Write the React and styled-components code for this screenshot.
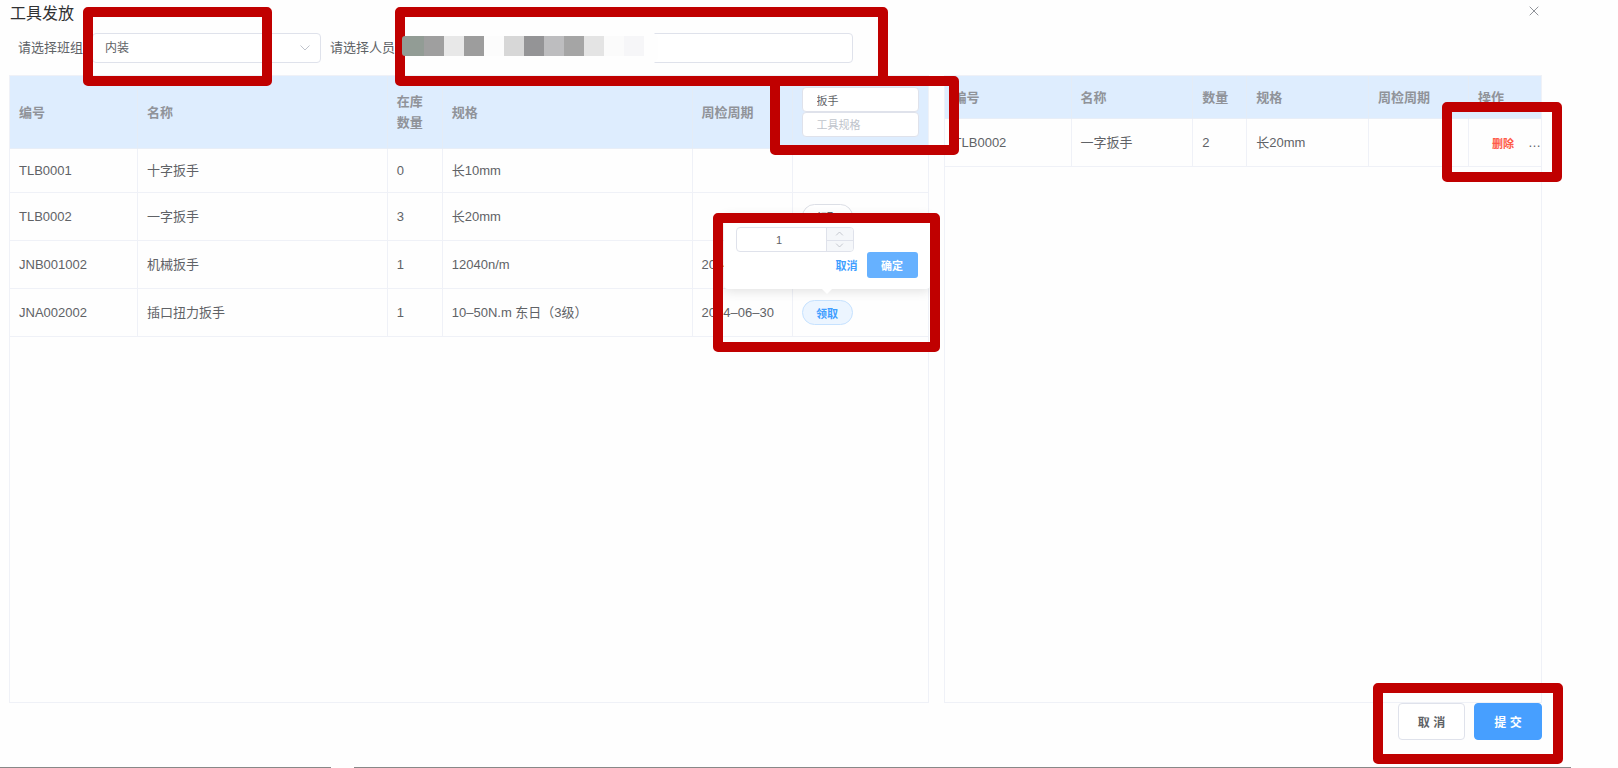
import React, { useState } from "react";
import styled, { createGlobalStyle, css } from "styled-components";

const GlobalStyle = createGlobalStyle`
  *, *::before, *::after { box-sizing: border-box; }
  body {
    margin: 0;
    background: #fefefe;
    color: #606266;
    font-family: "Liberation Sans", "Noto Sans CJK SC", sans-serif;
    font-size: 13px;
  }
  button, input, select { font-family: inherit; margin: 0; outline: none; }
  button { cursor: pointer; }
`;

const Dialog = styled.div`
  display: flex;
  flex-direction: column;
  min-height: 100vh;
`;

const Content = styled.main`
  flex: 1;
  display: flex;
  flex-direction: column;
  padding: 0 76px 27px 9px;
`;

const Header = styled.header`
  display: flex;
  justify-content: space-between;
  align-items: flex-start;
  height: 33px;
`;

const Title = styled.h1`
  margin: 0;
  padding-left: 1px;
  font-size: 16px;
  line-height: 28px;
  font-weight: 400;
  color: #303133;
`;

const CloseButton = styled.button`
  display: flex;
  align-items: center;
  justify-content: center;
  width: 16px;
  height: 22px;
  padding: 0;
  border: 0;
  background: none;
  color: #909399;
`;

const Form = styled.form`
  display: flex;
  align-items: center;
  gap: 9px;
  padding-left: 9px;
  margin-bottom: 12px;
`;

const Field = styled.div`
  display: flex;
  align-items: center;
  gap: 9px;
`;

const Label = styled.label`
  line-height: 28px;
  white-space: nowrap;
`;

const Control = styled.div`
  position: relative;
  width: ${(p) => p.$width}px;
`;

const boxed = css`
  border: 1px solid #dfe2eb;
  border-radius: 4px;
  background: #fff;
  color: #606266;
`;

const Select = styled.select`
  ${boxed}
  appearance: none;
  display: block;
  width: 100%;
  height: 30px;
  padding: 0 30px 0 12px;
  font-size: 12px;
`;

const Input = styled.input`
  ${boxed}
  display: block;
  width: 100%;
  height: 30px;
  padding: 0 12px;
  font-size: 12px;
`;

const SelectArrow = styled.svg`
  position: absolute;
  right: 10px;
  top: 9px;
  pointer-events: none;
`;

const Mosaic = styled.div`
  position: absolute;
  left: -2px;
  top: -1px;
  display: flex;
  width: 256px;
  height: 32px;
  padding: 4px 0 8px;
  border-radius: 8px;
  background: #fefefe;
`;

const MosaicTile = styled.span`
  position: relative;
  z-index: 6;
  width: 20px;
  background: ${(p) => p.$tone};
  &:first-child { width: 22px; border-radius: 3px 0 0 3px; }
`;

const Frame = styled.span`
  position: absolute;
  inset: ${(p) => p.$inset};
  z-index: 5;
  border: 10px solid #c00000;
  border-radius: 5px;
  pointer-events: none;
`;

const Panels = styled.div`
  flex: 1;
  display: flex;
  gap: 15px;
`;

const Panel = styled.section`
  flex: ${(p) => p.$grow} 1 0;
  min-width: 0;
  border: 1px solid #eff1f7;
`;

const Table = styled.table`
  width: 100%;
  table-layout: fixed;
  border-collapse: separate;
  border-spacing: 0;
`;

const HeadRow = styled.tr`
  height: ${(p) => p.$height}px;
`;

const BodyRow = styled.tr`
  height: ${(p) => (p.$compact ? 44 : 48)}px;
`;

const Th = styled.th`
  position: relative;
  padding: 0 9px;
  border-right: 1px solid #e4ecf6;
  border-bottom: 1px solid #e8eef7;
  background: #deedfe;
  color: #909399;
  font-weight: 700;
  line-height: 21px;
  text-align: left;
  &:last-child { border-right: 0; }
`;

const Td = styled.td`
  position: relative;
  padding: 0 9px;
  border-right: 1px solid #eff1f7;
  border-bottom: 1px solid #eff1f7;
  line-height: 20px;
  white-space: nowrap;
  &:last-child { border-right: 0; }
`;

const Filters = styled.div`
  position: relative;
  display: grid;
`;

const FilterInput = styled.input`
  ${boxed}
  width: 100%;
  height: 25px;
  padding: 0 14px;
  font-size: 11px;
  &::placeholder { color: #c0c4cc; opacity: 1; }
`;

const PillAnchor = styled.div`
  position: relative;
  width: 51px;
  height: 25px;
`;

const Pill = styled.button`
  width: 51px;
  height: 25px;
  padding: 0;
  border: 1px solid ${(p) => (p.$active ? "#c6e2ff" : "#dcdfe6")};
  border-radius: 13px;
  background: ${(p) => (p.$active ? "#ecf5ff" : "#fff")};
  color: ${(p) => (p.$active ? "#409eff" : "#606266")};
  font-size: 11px;
  font-weight: 700;
`;

const Popover = styled.div`
  position: absolute;
  left: -78px;
  bottom: 36px;
  z-index: 3;
  width: 206px;
  padding: 12px 12px 11px;
  border-radius: 4px;
  background: #fff;
  box-shadow: 0 2px 12px rgba(0, 0, 0, 0.12);
  &::after {
    content: "";
    position: absolute;
    left: 98px;
    bottom: -5px;
    border: 5px solid transparent;
    border-top-color: #fff;
    border-bottom: 0;
  }
`;

const Stepper = styled.div`
  ${boxed}
  display: flex;
  width: 118px;
  height: 25px;
  overflow: hidden;
`;

const StepperInput = styled.input`
  flex: 1;
  min-width: 0;
  border: 0;
  padding: 0 4px 0 0;
  background: none;
  color: #606266;
  font-size: 11px;
  text-align: center;
`;

const StepperButtons = styled.div`
  display: grid;
  grid-template-rows: 1fr 1fr;
  width: 27px;
  border-left: 1px solid #dfe2eb;
`;

const StepButton = styled.button`
  display: flex;
  align-items: center;
  justify-content: center;
  min-height: 0;
  padding: 0;
  border: 0;
  background: #f5f7fa;
  color: #b4b8c0;
  & + & { border-top: 1px solid #dfe2eb; }
`;

const PopoverActions = styled.div`
  display: flex;
  justify-content: flex-end;
  gap: 9px;
`;

const TextButton = styled.button`
  padding: 0;
  border: 0;
  background: none;
  color: ${(p) => p.$color};
  font-size: 11px;
  font-weight: 700;
`;

const ConfirmButton = styled.button`
  width: 51px;
  height: 26px;
  padding: 0;
  border: 0;
  border-radius: 3px;
  background: #66b1ff;
  color: #fff;
  font-size: 11px;
  font-weight: 700;
`;

const RowActions = styled.div`
  display: flex;
  justify-content: space-between;
  padding-left: 14px;
  margin-right: -9px;
`;

const Footer = styled.footer`
  display: flex;
  justify-content: flex-end;
`;

const FooterActions = styled.div`
  position: relative;
  display: flex;
  gap: 9px;
`;

const FooterButton = styled.button`
  width: ${(p) => (p.$primary ? 68 : 67)}px;
  height: 37px;
  padding: 0;
  border: 1px solid ${(p) => (p.$primary ? "#479fff" : "#dfe2eb")};
  border-radius: 4px;
  background: ${(p) => (p.$primary ? "#479fff" : "#fff")};
  color: ${(p) => (p.$primary ? "#fff" : "#606266")};
  font-size: 12px;
  font-weight: 700;
`;

const BaseLine = styled.div`
  display: flex;
  gap: 23px;
  padding-right: 47px;
`;

const LinePart = styled.span`
  height: 1px;
  background: #888;
  flex: ${(p) => (p.$width ? `0 0 ${p.$width}px` : "1")};
`;

function Chevron({ size, up }) {
  return (
    <svg width={size} height={size} viewBox="0 0 12 12" fill="none" stroke="currentColor" aria-hidden="true">
      <path d={up ? "M1.5 8.5 6 4l4.5 4.5" : "M1.5 3.5 6 8l4.5-4.5"} />
    </svg>
  );
}

const tiles = [
  "#929c95", "#9f9f9f", "#e8e8e8", "#9d9d9d", "#fcfcfc", "#d7d7d7",
  "#949496", "#bdbdbf", "#a5a5a5", "#e4e4e4", "#fbfbfb", "#f6f6f8",
];

const tools = [
  { code: "TLB0001", name: "十字扳手", stock: 0, spec: "长10mm", cycle: "" },
  { code: "TLB0002", name: "一字扳手", stock: 3, spec: "长20mm", cycle: "", take: true },
  { code: "JNB001002", name: "机械扳手", stock: 1, spec: "12040n/m", cycle: "2024–06–30" },
  { code: "JNA002002", name: "插口扭力扳手", stock: 1, spec: "10–50N.m 东日（3级）", cycle: "2024–06–30", take: true, open: true },
];

function TakePopover({ count, onChange }) {
  return (
    <Popover role="dialog" aria-label="领取">
      <Stepper>
        <StepperInput aria-label="数量" value={count} onChange={(e) => onChange(Number(e.target.value) || 1)} />
        <StepperButtons>
          <StepButton type="button" aria-label="增加" onClick={() => onChange(count + 1)}>
            <Chevron size={9} up />
          </StepButton>
          <StepButton type="button" aria-label="减少" onClick={() => onChange(Math.max(1, count - 1))}>
            <Chevron size={9} />
          </StepButton>
        </StepperButtons>
      </Stepper>
      <PopoverActions>
        <TextButton type="button" $color="#409eff">取消</TextButton>
        <ConfirmButton type="button">确定</ConfirmButton>
      </PopoverActions>
    </Popover>
  );
}

function StockTable() {
  const [keyword, setKeyword] = useState("扳手");
  const [count, setCount] = useState(1);
  return (
    <Table>
      <colgroup>
        <col width="128" /><col /><col width="55" /><col /><col width="100" /><col width="135" />
      </colgroup>
      <thead>
        <HeadRow $height={73}>
          <Th>编号</Th>
          <Th>名称</Th>
          <Th>在库数量</Th>
          <Th>规格</Th>
          <Th>周检周期</Th>
          <Th>
            <Filters>
              <FilterInput aria-label="工具名称" value={keyword} onChange={(e) => setKeyword(e.target.value)} />
              <FilterInput aria-label="工具规格" placeholder="工具规格" />
              <Frame $inset="-11px -40px -18px -32px" />
            </Filters>
          </Th>
        </HeadRow>
      </thead>
      <tbody>
        {tools.map((t) => (
          <BodyRow key={t.code} $compact={t.stock === 0}>
            <Td>{t.code}</Td>
            <Td>{t.name}</Td>
            <Td>{t.stock}</Td>
            <Td>{t.spec}</Td>
            <Td>{t.cycle}</Td>
            <Td>
              {t.take && (
                <PillAnchor>
                  <Pill type="button" $active={t.open}>领取</Pill>
                  {t.open && <TakePopover count={count} onChange={setCount} />}
                  {t.open && <Frame $inset="-87px -87px -27px -89px" />}
                </PillAnchor>
              )}
            </Td>
          </BodyRow>
        ))}
      </tbody>
    </Table>
  );
}

function PickedTable() {
  return (
    <Table>
      <colgroup>
        <col width="127" /><col /><col width="54" /><col /><col width="100" /><col width="72" />
      </colgroup>
      <thead>
        <HeadRow $height={43}>
          <Th>编号</Th>
          <Th>名称</Th>
          <Th>数量</Th>
          <Th>规格</Th>
          <Th>周检周期</Th>
          <Th>操作</Th>
        </HeadRow>
      </thead>
      <tbody>
        <BodyRow>
          <Td>TLB0002</Td>
          <Td>一字扳手</Td>
          <Td>2</Td>
          <Td>长20mm</Td>
          <Td />
          <Td>
            <RowActions>
              <TextButton type="button" $color="#ff5b48">删除</TextButton>
              <span>…</span>
            </RowActions>
            <Frame $inset="-17px -21px -16px -27px" />
          </Td>
        </BodyRow>
      </tbody>
    </Table>
  );
}

export default function App() {
  return (
    <Dialog>
      <GlobalStyle />
      <Content>
        <Header>
          <Title>工具发放</Title>
          <CloseButton type="button" aria-label="关闭">
            <svg width="10" height="10" viewBox="0 0 10 10" stroke="currentColor" fill="none" aria-hidden="true">
              <path d="M.7.7 9.3 9.3M9.3.7.7 9.3" />
            </svg>
          </CloseButton>
        </Header>
        <Form onSubmit={(e) => e.preventDefault()}>
          <Field>
            <Label htmlFor="team">请选择班组</Label>
            <Control $width={229}>
              <Select id="team" defaultValue="内装">
                <option>内装</option>
              </Select>
              <SelectArrow width="12" height="12" viewBox="0 0 12 12" fill="none" stroke="#c0c4cc" aria-hidden="true">
                <path d="M1.5 3.5 6 8l4.5-4.5" />
              </SelectArrow>
              <Frame $inset="-26px 49px -23px -9px" />
            </Control>
          </Field>
          <Field>
            <Label htmlFor="person">请选择人员</Label>
            <Control $width={449}>
              <Input id="person" />
              <Mosaic aria-hidden="true">
                {tiles.map((tone) => <MosaicTile key={tone} $tone={tone} />)}
              </Mosaic>
              <Frame $inset="-26px -35px -23px -9px" />
            </Control>
          </Field>
        </Form>
        <Panels>
          <Panel $grow={920}><StockTable /></Panel>
          <Panel $grow={598}><PickedTable /></Panel>
        </Panels>
        <Footer>
          <FooterActions>
            <FooterButton type="button">取 消</FooterButton>
            <FooterButton type="button" $primary>提 交</FooterButton>
            <Frame $inset="-20px -21px -24px -25px" />
          </FooterActions>
        </Footer>
      </Content>
      <BaseLine>
        <LinePart $width={331} />
        <LinePart />
      </BaseLine>
    </Dialog>
  );
}
